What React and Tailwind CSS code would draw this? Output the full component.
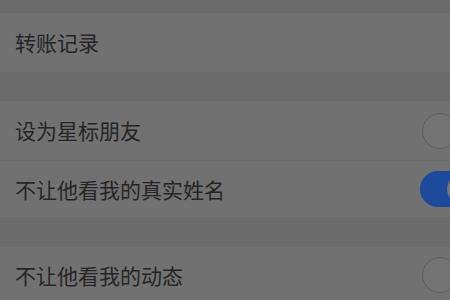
import React from "react";

const font = { fontFamily: '"Noto Sans CJK SC", "Noto Sans", sans-serif' };

function Circle() {
  return (
    <div className="w-[36px] h-[36px] shrink-0 rounded-full border-[1.5px] border-[#5b5b5b] bg-[#737373] -mr-[8px]" />
  );
}

function Toggle() {
  return (
    <div className="relative w-[60px] h-[36px] shrink-0 rounded-full bg-[#1d4a9b] -mr-[30px]">
      <div className="absolute right-[3px] top-[3px] w-[30px] h-[30px] rounded-full bg-[#767676]" />
    </div>
  );
}

function Row({ label, control, height, border }) {
  return (
    <div
      className={`flex items-center justify-between pl-[15px] bg-[#717171] ${height} ${
        border ? "border-b border-[#6a6a6a]" : ""
      }`}
    >
      <span className="text-[21px] leading-none text-[#262626]">{label}</span>
      {control}
    </div>
  );
}

export default function App() {
  return (
    <div className="w-[450px] h-[300px] overflow-hidden bg-[#6b6b6b]" style={font}>
      <div className="h-[13px]" />
      <Row label="转账记录" height="h-[59px]" />
      <div className="h-[29px]" />
      <Row label="设为星标朋友" height="h-[60px]" border control={<Circle />} />
      <Row label="不让他看我的真实姓名" height="h-[56px]" control={<Toggle />} />
      <div className="h-[30px]" />
      <Row label="不让他看我的动态" height="h-[56px]" control={<Circle />} />
    </div>
  );
}
